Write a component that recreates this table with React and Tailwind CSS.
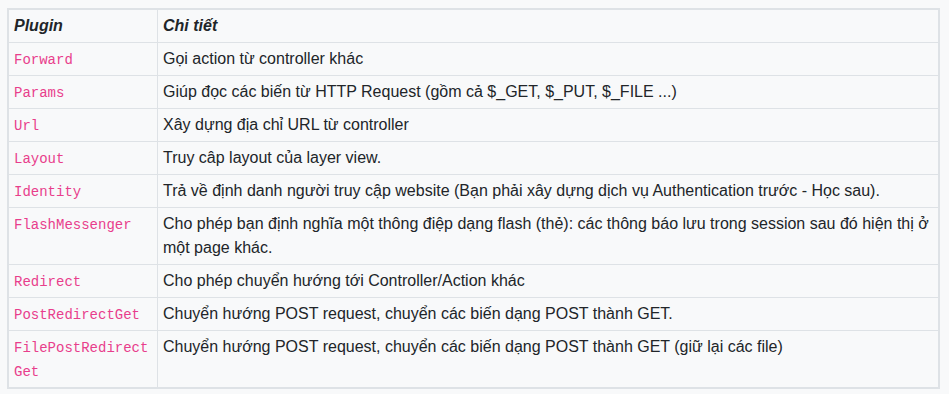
const rows = [
  ["Forward", "Gọi action từ controller khác"],
  ["Params", "Giúp đọc các biến từ HTTP Request (gồm cả $_GET, $_PUT, $_FILE ...)"],
  ["Url", "Xây dựng địa chỉ URL từ controller"],
  ["Layout", "Truy câp layout của layer view."],
  ["Identity", "Trả về định danh người truy cập website (Bạn phải xây dựng dịch vụ Authentication trước - Học sau)."],
  ["FlashMessenger", "Cho phép bạn định nghĩa một thông điệp dạng flash (thẻ): các thông báo lưu trong session sau đó hiện thị ở một page khác."],
  ["Redirect", "Cho phép chuyển hướng tới Controller/Action khác"],
  ["PostRedirectGet", "Chuyển hướng POST request, chuyển các biến dạng POST thành GET."],
  ["FilePostRedirectGet", "Chuyển hướng POST request, chuyển các biến dạng POST thành GET (giữ lại các file)"],
];

export default function App() {
  return (
    <div className="min-h-[394px] w-[949px] bg-[#f8f9fa] pt-[8px] pl-[7px] font-['Liberation_Sans',Arial,sans-serif] text-[16px] leading-[24px] text-[#212529]">
      <table className="w-[933px] table-fixed border-separate border-spacing-0 border-2 border-[#dee2e6]">
        <colgroup>
          <col className="w-[149px]" />
          <col />
        </colgroup>
        <thead>
          <tr>
            <th className="border-b border-r border-[#dee2e6] px-[5px] py-[4px] text-left font-bold italic">Plugin</th>
            <th className="border-b border-[#dee2e6] px-[5px] py-[4px] text-left font-bold italic">Chi tiết</th>
          </tr>
        </thead>
        <tbody>
          {rows.map(([name, desc], i) => {
            const last = i === rows.length - 1;
            return (
              <tr key={name} className="align-top">
                <td className={`border-r border-[#dee2e6] px-[5px] py-[4px] break-all ${last ? "" : "border-b"}`}>
                  <code className="font-['Liberation_Mono',monospace] text-[14px] leading-none text-[#e83e8c]">{name}</code>
                </td>
                <td className={`border-[#dee2e6] px-[5px] py-[4px] ${last ? "" : "border-b"}`}>{desc}</td>
              </tr>
            );
          })}
        </tbody>
      </table>
    </div>
  );
}
